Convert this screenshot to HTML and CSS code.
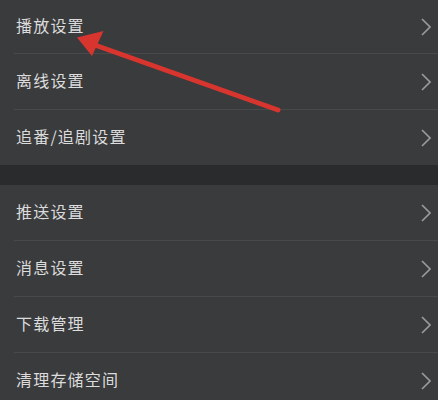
FILE: index.html
```html
<!DOCTYPE html>
<html lang="zh-CN">
<head>
<meta charset="utf-8">
<title>设置</title>
<link rel="stylesheet" href="styles.css">
</head>
<body>
<div class="page">
  <ul class="group">
    <li class="row first"><span class="label">播放设置</span><svg class="chev" viewBox="0 0 10 18"><path d="M1 1 L9 9 L1 17"/></svg></li>
    <li class="row"><span class="label">离线设置</span><svg class="chev" viewBox="0 0 10 18"><path d="M1 1 L9 9 L1 17"/></svg></li>
    <li class="row"><span class="label">追番/追剧设置</span><svg class="chev" viewBox="0 0 10 18"><path d="M1 1 L9 9 L1 17"/></svg></li>
  </ul>
  <div class="band"></div>
  <ul class="group">
    <li class="row"><span class="label">推送设置</span><svg class="chev" viewBox="0 0 10 18"><path d="M1 1 L9 9 L1 17"/></svg></li>
    <li class="row"><span class="label">消息设置</span><svg class="chev" viewBox="0 0 10 18"><path d="M1 1 L9 9 L1 17"/></svg></li>
    <li class="row"><span class="label">下载管理</span><svg class="chev" viewBox="0 0 10 18"><path d="M1 1 L9 9 L1 17"/></svg></li>
    <li class="row"><span class="label">清理存储空间</span><svg class="chev" viewBox="0 0 10 18"><path d="M1 1 L9 9 L1 17"/></svg></li>
  </ul>
  <svg class="annot" viewBox="0 0 438 400" width="438" height="400">
    <line x1="278" y1="110" x2="92" y2="44" stroke="#d8352f" stroke-width="5" stroke-linecap="round"/>
    <polygon points="77,37.5 103.5,31 92,56" fill="#d8352f"/>
  </svg>
</div>
</body>
</html>
```
FILE: styles.css
```css
html, body {
  margin: 0;
  padding: 0;
  background: #3a3b3d;
}
.page {
  position: relative;
  width: 438px;
  height: 400px;
  overflow: hidden;
  background: #3a3b3d;
  font-family: "Noto Sans CJK SC", "Noto Sans", sans-serif;
}
.group {
  list-style: none;
  margin: 0;
  padding: 0;
}
.row {
  display: flex;
  align-items: center;
  justify-content: space-between;
  height: 55px;
  margin-left: 14px;
  padding-right: 8px;
  border-top: 1px solid #48494b;
  box-sizing: content-box;
}
.group .row:first-child {
  border-top: none;
}
.row.first {
  height: 53px;
}
.label {
  color: #dcdcdc;
  font-size: 16px;
  line-height: 20px;
  letter-spacing: 1.2px;
  padding-left: 2px;
  margin-bottom: 4px;
}
.chev {
  width: 10px;
  height: 18px;
  margin-right: -1px;
  fill: none;
  stroke: #9b9b9b;
  stroke-width: 1.6;
}
.band {
  height: 20px;
  background: #2a2b2d;
}
.annot {
  position: absolute;
  left: 0;
  top: 0;
  pointer-events: none;
}
```
